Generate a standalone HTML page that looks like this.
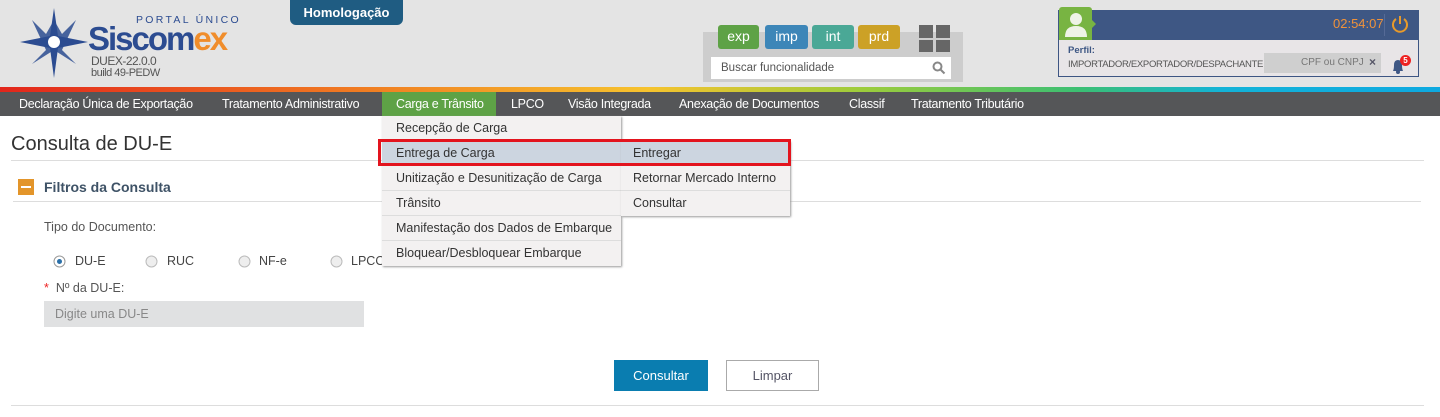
<!DOCTYPE html>
<html><head><meta charset="utf-8"><style>
*{margin:0;padding:0;box-sizing:border-box}
body{width:1440px;height:417px;overflow:hidden;background:#fff;font-family:"Liberation Sans",sans-serif;position:relative;color:#444}
.a{position:absolute}
.hdr{left:0;top:0;width:1440px;height:87px;background:#e4e4e4}
.stripe{left:0;top:87px;width:1440px;height:5px;background:linear-gradient(90deg,#e2261c 0%,#f07c22 25%,#f6c32e 45%,#9ccc3c 60%,#3bbf73 75%,#13b3d8 85%,#0ea9e0 100%)}
.nav{left:0;top:92px;width:1440px;height:24px;background:#555658}
.nav span{position:absolute;top:0;height:24px;line-height:24px;color:#fff;font-size:12.5px;letter-spacing:-0.3px}
.dd{background:#f3f1f1;box-shadow:1px 1px 2px #999}
.dd div{position:absolute;left:0;height:25px;line-height:24px;font-size:12.5px;color:#333;padding-left:14px;border-bottom:1px solid #ddd;width:100%;white-space:nowrap}
.tag{top:25px;height:24px;line-height:23px;color:#fff;font-size:14px;text-align:center;border-radius:3px}
</style></head><body>
<div class="a hdr"></div>
<svg class="a" style="left:18px;top:6px" width="72" height="72" viewBox="0 0 72 72">
<polygon points="36,2 40,30 70,36 40,42 36,72 32,42 2,36 32,30" fill="#2c4c91"/>
<polygon points="36,14 44,28 58,14 44,44 58,58 36,44 14,58 28,44 14,14 28,28" fill="#2c4c91" opacity=".85"/>
<circle cx="36" cy="36" r="6" fill="#fff"/>
</svg>
<div class="a" style="left:136px;top:14px;font-size:10.5px;letter-spacing:2.3px;color:#2c4c91">PORTAL ÚNICO</div>
<div class="a" style="left:88px;top:21px;font-size:33px;font-weight:bold;letter-spacing:-2px;color:#2c4c91;line-height:36px">Siscom<span style="color:#f08d2b">ex</span></div>
<div class="a" style="left:91px;top:54px;font-size:12px;color:#555;letter-spacing:-0.5px">DUEX-22.0.0</div>
<div class="a" style="left:91px;top:67px;font-size:11px;color:#555;letter-spacing:-0.5px">build 49-PEDW</div>
<div class="a" style="left:290px;top:0;width:113px;height:25px;background:#1f5c82;border-radius:0 0 6px 6px;color:#fff;font-weight:bold;font-size:13px;text-align:center;line-height:26px">Homologação</div>
<div class="a" style="left:703px;top:32px;width:260px;height:50px;background:#cdcdcd"></div>
<div class="a tag" style="left:718px;width:41px;background:#5ea246">exp</div>
<div class="a tag" style="left:765px;width:43px;background:#3d86b8">imp</div>
<div class="a tag" style="left:812px;width:42px;background:#4aa896">int</div>
<div class="a tag" style="left:858px;width:42px;background:#cca126">prd</div>
<div class="a" style="left:919px;top:25px;width:14px;height:13px;background:#666"></div>
<div class="a" style="left:936px;top:25px;width:14px;height:13px;background:#666"></div>
<div class="a" style="left:919px;top:40px;width:14px;height:12px;background:#666"></div>
<div class="a" style="left:936px;top:40px;width:14px;height:12px;background:#666"></div>
<div class="a" style="left:711px;top:57px;width:240px;height:22px;background:#fff;font-size:11.5px;color:#555;padding-left:10px;line-height:22px">Buscar funcionalidade</div>
<svg class="a" style="left:932px;top:61px" width="14" height="14"><circle cx="5.5" cy="5.5" r="4" fill="none" stroke="#888" stroke-width="2"/><line x1="8.5" y1="8.5" x2="12.5" y2="12.5" stroke="#888" stroke-width="2"/></svg>
<div class="a" style="left:1058px;top:10px;width:361px;height:67px;border:1px solid #3d5583;background:#e8e5e7"></div>
<div class="a" style="left:1058px;top:10px;width:361px;height:30px;background:#3e5784"></div>
<div class="a" style="left:1059px;top:7px;width:33px;height:33px;background:#78b442;border-radius:3px 3px 0 0"></div>
<div class="a" style="left:1091px;top:19px;width:0;height:0;border-top:5px solid transparent;border-bottom:5px solid transparent;border-left:5px solid #78b442"></div>
<svg class="a" style="left:1064px;top:11px" width="24" height="26"><circle cx="12" cy="8" r="6" fill="#eef3e6"/><path d="M1 26 Q1 15 12 15 Q23 15 23 26Z" fill="#eef3e6"/></svg>
<div class="a" style="left:1333px;top:16px;font-size:13px;color:#f0923a">02:54:07</div>
<div class="a" style="left:1384px;top:14px;width:1px;height:22px;background:#556a96"></div>
<svg class="a" style="left:1390px;top:14px" width="20" height="20"><path d="M6 5 A7 7 0 1 0 14 5" fill="none" stroke="#e89a2a" stroke-width="2"/><line x1="10" y1="2" x2="10" y2="10" stroke="#e89a2a" stroke-width="2"/></svg>
<div class="a" style="left:1068px;top:45px;font-size:9.5px;font-weight:bold;color:#3e5784">Perfil:</div>
<div class="a" style="left:1068px;top:59px;font-size:9.5px;color:#555;letter-spacing:-0.3px;white-space:nowrap">IMPORTADOR/EXPORTADOR/DESPACHANTE</div>
<div class="a" style="left:1264px;top:53px;width:117px;height:20px;background:#cfcfcf"></div>
<div class="a" style="left:1301px;top:57px;font-size:10px;color:#777;white-space:nowrap">CPF ou CNPJ</div>
<div class="a" style="left:1369px;top:55px;font-size:12px;font-weight:bold;color:#556">×</div>
<svg class="a" style="left:1390px;top:58px" width="16" height="16"><path d="M3 13 Q4 11 4 7 Q4 2 8 2 Q12 2 12 7 Q12 11 13 13Z" fill="#3e5784"/><circle cx="8" cy="14" r="2" fill="#3e5784"/></svg>
<div class="a" style="left:1400px;top:55px;width:11px;height:11px;border-radius:50%;background:#e22;color:#fff;font-size:8px;font-weight:bold;text-align:center;line-height:11px">5</div>
<div class="a stripe"></div>
<div class="a nav">
<span style="left:19px">Declaração Única de Exportação</span>
<span style="left:222px">Tratamento Administrativo</span>
<span style="left:382px;width:114px;background:#5ea246;padding-left:14px">Carga e Trânsito</span>
<span style="left:511px">LPCO</span>
<span style="left:568px">Visão Integrada</span>
<span style="left:679px">Anexação de Documentos</span>
<span style="left:849px">Classif</span>
<span style="left:911px">Tratamento Tributário</span>
</div>
<div class="a" style="left:11px;top:133px;font-size:20px;color:#333">Consulta de DU-E</div>
<div class="a" style="left:11px;top:160px;width:1413px;height:1px;background:#ddd"></div>
<div class="a" style="left:18px;top:179px;width:16px;height:16px;background:#e3952a"></div>
<div class="a" style="left:21px;top:186px;width:10px;height:2px;background:#fff"></div>
<div class="a" style="left:44px;top:179px;font-size:14px;font-weight:bold;color:#3e5266">Filtros da Consulta</div>
<div class="a" style="left:13px;top:201px;width:1408px;height:1px;background:#ddd"></div>
<div class="a" style="left:44px;top:220px;font-size:12.5px;color:#555">Tipo do Documento:</div>
<svg class="a" style="left:53px;top:255px" width="330" height="13">
<circle cx="6.5" cy="6.5" r="5.5" fill="#fff" stroke="#999"/><circle cx="6.5" cy="6.5" r="2.5" fill="#2a6fa8"/>
<circle cx="98.5" cy="6.5" r="5.5" fill="#eee" stroke="#bbb"/>
<circle cx="191.5" cy="6.5" r="5.5" fill="#eee" stroke="#bbb"/>
<circle cx="283.5" cy="6.5" r="5.5" fill="#eee" stroke="#bbb"/>
</svg>
<div class="a" style="left:75px;top:254px;font-size:12.5px;color:#444">DU-E</div>
<div class="a" style="left:167px;top:254px;font-size:12.5px;color:#444">RUC</div>
<div class="a" style="left:259px;top:254px;font-size:12.5px;color:#444">NF-e</div>
<div class="a" style="left:351px;top:254px;font-size:12.5px;color:#444">LPCO</div>
<div class="a" style="left:44px;top:281px;font-size:12.5px;color:#555"><span style="color:#e22">*</span>&nbsp; Nº da DU-E:</div>
<div class="a" style="left:44px;top:301px;width:320px;height:26px;background:#e0e1e2;font-size:12.5px;color:#888;line-height:26px;padding-left:11px">Digite uma DU-E</div>
<div class="a" style="left:614px;top:360px;width:94px;height:31px;background:#0a7db0;color:#fff;font-size:13px;text-align:center;line-height:31px">Consultar</div>
<div class="a" style="left:726px;top:360px;width:93px;height:31px;border:1px solid #aaa;color:#556;font-size:13px;text-align:center;line-height:29px">Limpar</div>
<div class="a" style="left:11px;top:405px;width:1413px;height:1px;background:#ddd"></div>
<div class="a dd" style="left:382px;top:116px;width:239px;height:150px">
<div style="top:0">Recepção de Carga</div>
<div style="top:25px;background:#ccd5e0">Entrega de Carga</div>
<div style="top:50px">Unitização e Desunitização de Carga</div>
<div style="top:75px">Trânsito</div>
<div style="top:100px">Manifestação dos Dados de Embarque</div>
<div style="top:125px;border:0">Bloquear/Desbloquear Embarque</div>
</div>
<div class="a dd" style="left:621px;top:141px;width:169px;height:75px">
<div style="top:0;background:#ccd5e0;padding-left:12px">Entregar</div>
<div style="top:25px;padding-left:12px">Retornar Mercado Interno</div>
<div style="top:50px;border:0;padding-left:12px">Consultar</div>
</div>
<div class="a" style="left:378px;top:139px;width:413px;height:27px;border:3px solid #e3141e"></div>
</body></html>
